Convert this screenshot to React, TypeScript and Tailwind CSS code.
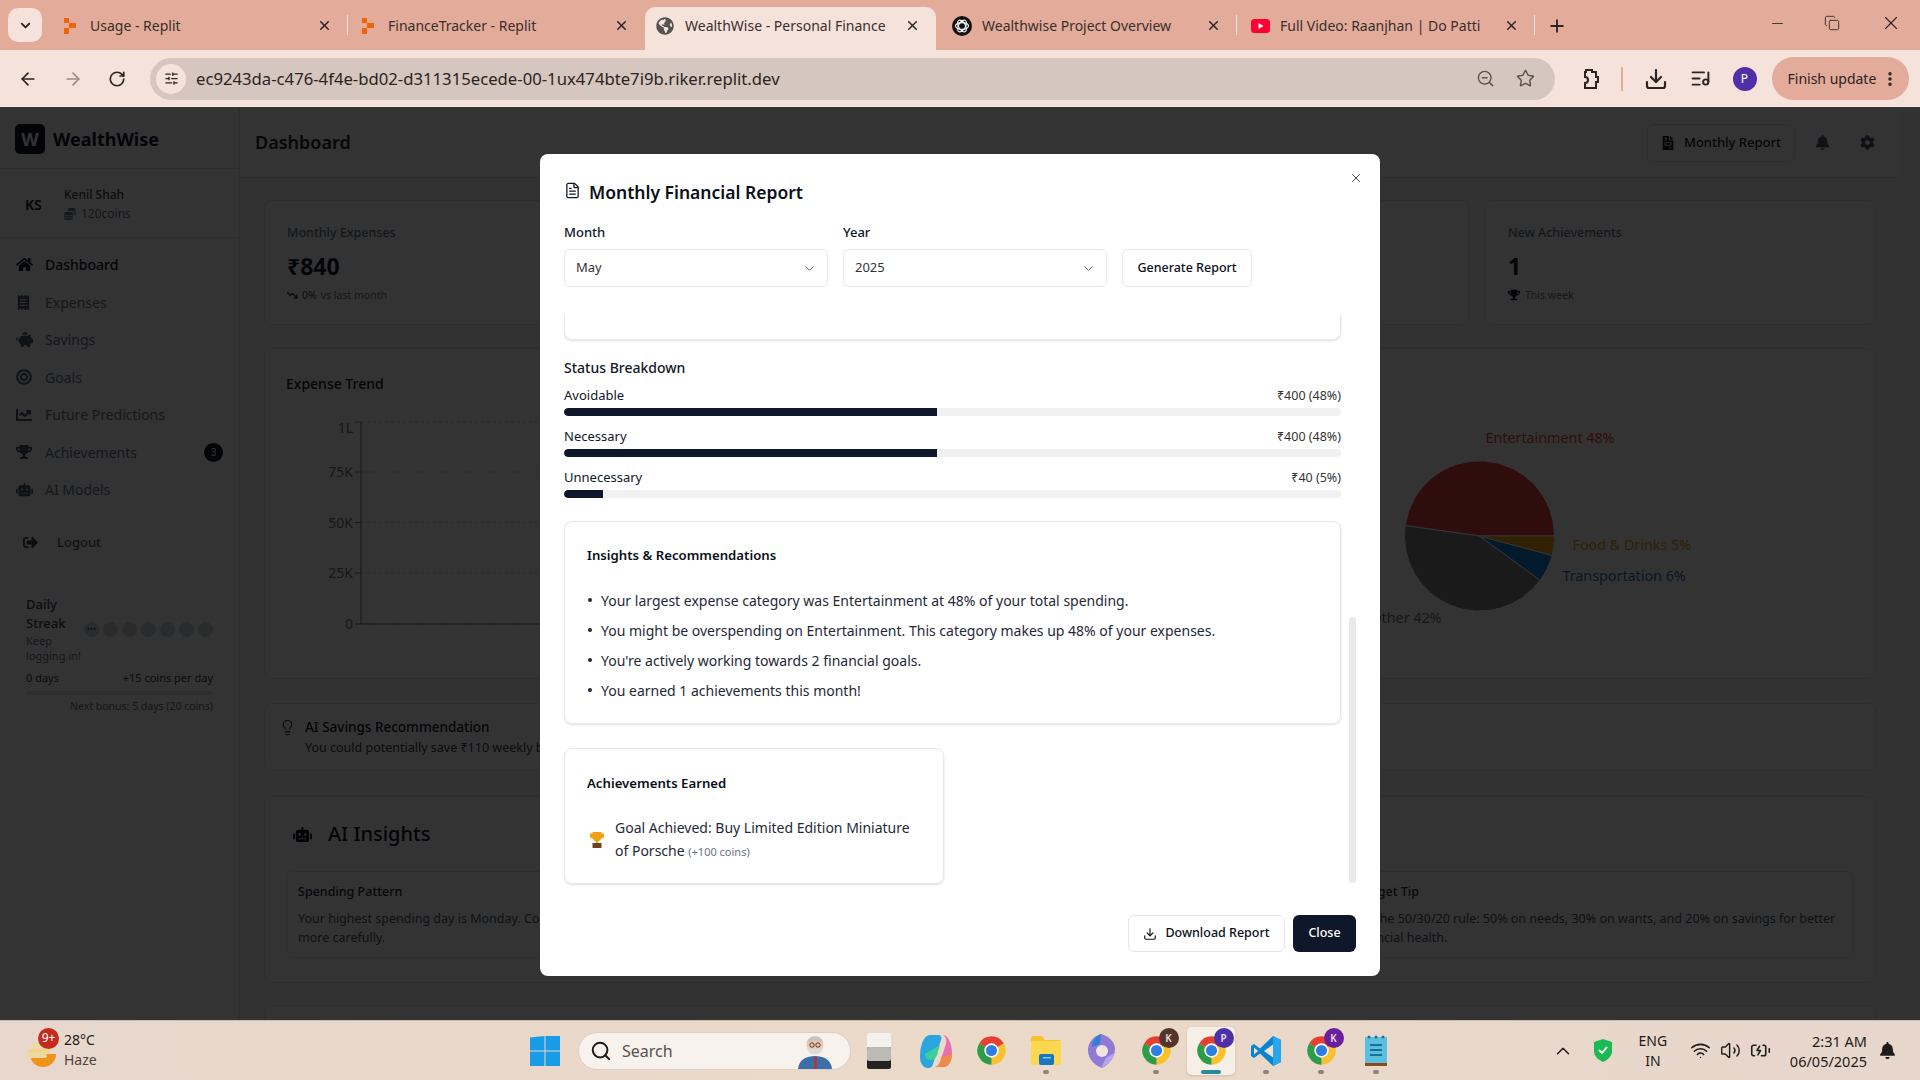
import type { ReactNode } from "react";
import {
  ArrowLeft,
  ArrowRight,
  BatteryCharging,
  ChevronDown,
  ChevronUp,
  Copy,
  Download,
  EllipsisVertical,
  FileText,
  Lightbulb,
  ListMusic,
  Minus,
  Plus,
  RotateCw,
  Search,
  SlidersHorizontal,
  Star,
  Volume2,
  Wifi,
  X,
  ZoomOut,
} from "lucide-react";
import {
  FaBell,
  FaBullseye,
  FaChartLine,
  FaCoins,
  FaCog,
  FaFileInvoice,
  FaGlobeAmericas,
  FaHome,
  FaPiggyBank,
  FaReceipt,
  FaRobot,
  FaSignOutAlt,
  FaTrophy,
} from "react-icons/fa";

function ReplitIcon() {
  return (
    <svg width="14" height="16" viewBox="0 0 14 16" className="shrink-0">
      <path d="M1 0h5v5H1zM6 5h7v5H6zM1 10h5v6H1z" fill="#f26207" />
    </svg>
  );
}

function YoutubeIcon() {
  return (
    <svg width="19" height="14" viewBox="0 0 19 14" className="shrink-0">
      <rect width="19" height="14" rx="3.5" fill="#ff0033" />
      <path d="M7.5 4l5 3-5 3z" fill="#fff" />
    </svg>
  );
}

function ChatGptIcon() {
  return (
    <svg width="20" height="20" viewBox="0 0 20 20" className="shrink-0">
      <circle cx="10" cy="10" r="10" fill="#111" />
      <g fill="none" stroke="#fff" strokeWidth="1.1">
        <ellipse cx="10" cy="10" rx="6.5" ry="3.4" />
        <ellipse cx="10" cy="10" rx="6.5" ry="3.4" transform="rotate(60 10 10)" />
        <ellipse cx="10" cy="10" rx="6.5" ry="3.4" transform="rotate(120 10 10)" />
      </g>
    </svg>
  );
}

function Tab({
  icon,
  title,
  active,
  sep,
  widthClass,
}: {
  icon: ReactNode;
  title: string;
  active?: boolean;
  sep?: boolean;
  widthClass: string;
}) {
  return (
    <div
      className={`relative flex h-[43px] items-center pb-[6px] ${widthClass} ${
        active ? "rounded-t-[10px] bg-[#f5e2db]" : ""
      }`}
    >
      <div className="flex w-[40px] shrink-0 justify-center">{icon}</div>
      <span className="min-w-0 flex-1 overflow-hidden text-[14px] whitespace-nowrap text-[#3b2f2b]">
        {title}
      </span>
      <div className="flex w-[48px] shrink-0 justify-center">
        <X size={15} strokeWidth={2.4} className="text-[#2b2422]" />
      </div>
      {sep && <div className="absolute top-[8px] right-0 h-[20px] w-[1.5px] bg-[#f5e2db]" />}
    </div>
  );
}

function BrowserChrome() {
  return (
    <div className="shrink-0">
      <div className="flex h-[50px] items-end bg-[#e2ab9a] pl-[8px]">
        <div className="mr-[8px] mb-[8px] flex h-[34px] w-[34px] items-center justify-center rounded-[10px] bg-[#f5e2db]">
          <ChevronDown size={15} strokeWidth={3} className="text-[#2b2422]" />
        </div>
        <Tab icon={<ReplitIcon />} title="Usage - Replit" sep widthClass="w-[298px]" />
        <Tab icon={<ReplitIcon />} title="FinanceTracker - Replit" widthClass="w-[297px]" />
        <Tab
          icon={<FaGlobeAmericas size={18} className="text-[#55524f]" />}
          title="WealthWise - Personal Finance"
          active
          widthClass="w-[291px]"
        />
        <Tab icon={<ChatGptIcon />} title="Wealthwise Project Overview" sep widthClass="w-[301px] pl-[6px]" />
        <Tab icon={<YoutubeIcon />} title="Full Video: Raanjhan | Do Patti" sep widthClass="w-[298px] pl-[3px]" />
        <div className="mb-[14px] flex w-[44px] justify-center">
          <Plus size={20} strokeWidth={2.2} className="text-[#2b2422]" />
        </div>
        <div className="mb-[16px] ml-auto flex items-center pr-[18px] text-[#2b2422]">
          <Minus size={17} strokeWidth={1.2} />
          <Copy size={16} strokeWidth={1.3} className="ml-[38px]" />
          <X size={22} strokeWidth={1.2} className="ml-[40px]" />
        </div>
      </div>
      <div className="flex h-[57px] items-center bg-[#f5e2db] pl-[18px]">
        <ArrowLeft size={20} strokeWidth={2} className="text-[#2b2422]" />
        <ArrowRight size={20} strokeWidth={2} className="ml-[25px] text-[#9a8d88]" />
        <RotateCw size={18} strokeWidth={2.2} className="ml-[25px] text-[#2b2422]" />
        <div className="ml-[24px] flex h-[42px] w-[1405px] items-center rounded-full bg-[#d5c6bf] pr-[20px] pl-[6px]">
          <div className="flex h-[30px] w-[30px] items-center justify-center rounded-full bg-[#f5e2db]">
            <SlidersHorizontal size={15} strokeWidth={2} className="text-[#2b2422]" />
          </div>
          <span className="ml-[10px] text-[16.7px] text-[#2b2422]">
            ec9243da-c476-4f4e-bd02-d311315ecede-00-1ux474bte7i9b.riker.replit.dev
          </span>
          <ZoomOut size={19} strokeWidth={1.8} className="ml-auto text-[#5c5452]" />
          <Star size={19} strokeWidth={1.8} className="ml-[21px] text-[#5c5452]" />
        </div>
        <svg width="24" height="24" viewBox="0 0 24 24" className="ml-[23px]" fill="none" stroke="#2b2422" strokeWidth="2">
          <path d="M8 5V3h6v2h4v5h2v5h-2v6H7v-5a3 3 0 0 0 0-6V5z" />
        </svg>
        <div className="ml-[19px] h-[24px] w-[1.5px] bg-[#e2ab9a]" />
        <Download size={24} strokeWidth={2.2} className="ml-[21px] text-[#2b2422]" />
        <ListMusic size={21} strokeWidth={2.2} className="ml-[22px] text-[#2b2422]" />
        <div className="ml-[22px] flex h-[24px] w-[24px] items-center justify-center rounded-full bg-[#4f2fa8] text-[12px] text-white">
          P
        </div>
        <div className="ml-[15px] flex h-[43px] w-[137px] items-center rounded-full bg-[#e2ab9a] pl-[16px] text-[14px] text-[#2b2422]">
          Finish update
          <EllipsisVertical size={18} strokeWidth={2.6} className="ml-[5px]" />
        </div>
      </div>
      <div className="h-px bg-[#3a3a3a]" />
    </div>
  );
}

const navItems = [
  { label: "Dashboard", icon: <FaHome size={17} />, active: true },
  { label: "Expenses", icon: <FaReceipt size={15} /> },
  { label: "Savings", icon: <FaPiggyBank size={17} /> },
  { label: "Goals", icon: <FaBullseye size={16} /> },
  { label: "Future Predictions", icon: <FaChartLine size={16} /> },
  { label: "Achievements", icon: <FaTrophy size={16} />, badge: "3" },
  { label: "AI Models", icon: <FaRobot size={17} /> },
];

function Sidebar() {
  return (
    <aside className="flex h-full w-[240px] shrink-0 flex-col border-r border-[#e5e7eb] bg-white">
      <div className="flex h-[61px] items-center gap-[8px] border-b border-[#e5e7eb] pt-[2px] pl-[15px]">
        <div className="flex h-[30px] w-[30px] items-center justify-center rounded-[5px] bg-[#0f172a] text-[18px] font-bold text-white">
          W
        </div>
        <span className="text-[18px] font-bold text-[#0f172a]">WealthWise</span>
      </div>
      <div className="flex h-[69px] items-center border-b border-[#e5e7eb] pt-[2px] pl-[25px]">
        <span className="w-[39px] text-[14px] font-semibold text-[#0f172a]">KS</span>
        <div>
          <div className="text-[12px] leading-[19px] font-medium text-[#334155]">Kenil Shah</div>
          <div className="flex items-center gap-[5px] text-[12px] leading-[19px] text-[#64748b]">
            <FaCoins size={12} />
            120coins
          </div>
        </div>
      </div>
      <nav className="mt-[8px] flex flex-col">
        {navItems.map((item) => (
          <div
            key={item.label}
            className={`flex h-[37.5px] items-center pr-[16px] pl-[16px] text-[14px] ${
              item.active ? "font-medium text-[#0f172a]" : "text-[#64748b]"
            }`}
          >
            <span className={`flex w-[29px] ${item.active ? "text-[#0f172a]" : "text-[#475569]"}`}>{item.icon}</span>
            {item.label}
            {item.badge && (
              <span className="ml-auto flex h-[19px] w-[19px] items-center justify-center rounded-full bg-[#0f172a] text-[10px] text-white">
                {item.badge}
              </span>
            )}
          </div>
        ))}
      </nav>
      <div className="mt-[24px] flex items-center pl-[23px] text-[13px] font-medium text-[#475569]">
        <FaSignOutAlt size={15} className="mr-[19px] text-[#334155]" />
        Logout
      </div>
      <div className="mt-[43px] px-[26px]">
        <div className="flex items-center justify-between">
          <div className="w-[56px]">
            <div className="text-[13px] leading-[19px] font-medium text-[#334155]">Daily Streak</div>
            <div className="text-[11px] leading-[15px] text-[#64748b]">Keep logging in!</div>
          </div>
          <div className="flex gap-[4px]">
            {[0, 1, 2, 3, 4, 5, 6].map((d) => (
              <div
                key={d}
                className="flex h-[15px] w-[15px] items-center justify-center rounded-full bg-[#d1d5db] text-[8px] leading-none text-[#475569]"
              >
                {d === 0 ? "•••" : ""}
              </div>
            ))}
          </div>
        </div>
        <div className="mt-[7px] flex justify-between text-[11px] text-[#334155]">
          <span>0 days</span>
          <span>+15 coins per day</span>
        </div>
        <div className="mt-[4px] h-[4px] rounded-full bg-[#e5e7eb]" />
        <div className="mt-[4px] text-right text-[10.5px] text-[#64748b]">Next bonus: 5 days (20 coins)</div>
      </div>
    </aside>
  );
}

function StatCard({ title, value, sub }: { title?: string; value?: string; sub?: ReactNode }) {
  return (
    <div className="h-[125px] rounded-lg border border-[#e5e7eb] bg-white px-[22px] pt-[22px]">
      {title && (
        <>
          <div className="text-[12.5px] leading-[20px] font-medium text-[#64748b]">{title}</div>
          <div className="mt-[7px] text-[23px] leading-[32px] font-bold text-[#0f172a]">{value}</div>
          <div className="mt-[5px] flex items-center gap-[4px] text-[10.5px] leading-[16px] text-[#64748b]">{sub}</div>
        </>
      )}
    </div>
  );
}

function TrendChart() {
  const ticks = [
    { y: 10, label: "1L", dy: 11 },
    { y: 60, label: "75K", dy: 5 },
    { y: 110.5, label: "50K", dy: 5 },
    { y: 161, label: "25K", dy: 5 },
    { y: 212, label: "0", dy: 5 },
  ];
  return (
    <svg viewBox="0 0 746 252" className="h-[252px] w-[746px]">
      {ticks.map((t) => (
        <g key={t.label}>
          <line x1="75" x2="746" y1={t.y} y2={t.y} stroke="#d1d5db" strokeDasharray="3 3" />
          <line x1="69" x2="75" y1={t.y} y2={t.y} stroke="#6b7280" />
          <text x="67" y={t.y + t.dy} textAnchor="end" fontSize="14" fill="#6b7280">
            {t.label}
          </text>
        </g>
      ))}
      <line x1="75" x2="75" y1="10" y2="212" stroke="#6b7280" />
      <line x1="75" x2="746" y1="212" y2="212" stroke="#6b7280" />
    </svg>
  );
}

function PieChart() {
  return (
    <svg viewBox="0 0 746 252" className="h-[252px] w-[746px]">
      <g transform="translate(2.5 0)">
        <g stroke="#ffffff" strokeWidth="1">
          <path d="M373 124 L448 124 A75 75 0 0 0 298.7 113.6 Z" fill="#ef4444" />
          <path d="M373 124 L298.7 113.6 A75 75 0 0 0 433.6 168.2 Z" fill="#808080" />
          <path d="M373 124 L433.6 168.2 A75 75 0 0 0 445.7 143.4 Z" fill="#0a84d8" />
          <path d="M373 124 L445.7 143.4 A75 75 0 0 0 448 124 Z" fill="#f59e0b" />
        </g>
        <text x="379" y="31" fontSize="14.3" fill="#ef4444">Entertainment 48%</text>
        <text x="466" y="138" fontSize="14.3" fill="#f59e0b">Food &amp; Drinks 5%</text>
        <text x="456" y="169" fontSize="14.3" fill="#1d74c4">Transportation 6%</text>
        <text x="335" y="211" textAnchor="end" fontSize="14.3" fill="#6b7280">Other 42%</text>
      </g>
    </svg>
  );
}

function Dashboard() {
  const insights = [
    {
      t: "Spending Pattern",
      d: "Your highest spending day is Monday. Consider\nmore carefully.",
    },
    { t: "", d: "" },
    {
      t: "Budget Tip",
      d: "Try the 50/30/20 rule: 50% on needs, 30% on wants, and 20% on savings for better financial health.",
    },
  ];
  return (
    <div className="flex h-full min-w-0 flex-1 flex-col pr-[20px]">
      <header className="flex h-[70px] shrink-0 items-center justify-between border-b border-[#e5e7eb] bg-white pr-[25px] pl-[15px]">
        <h1 className="text-[18px] font-semibold text-[#1e293b]">Dashboard</h1>
        <div className="flex items-center">
          <div className="flex h-[38px] w-[148px] items-center justify-center gap-[9px] rounded-md border border-[#e5e7eb] text-[13px] font-medium text-[#0f172a]">
            <FaFileInvoice size={14} />
            Monthly Report
          </div>
          <FaBell size={15} className="ml-[20px] text-[#475569]" />
          <FaCog size={15} className="ml-[30px] text-[#475569]" />
        </div>
      </header>
      <div className="flex flex-col px-[24px] pt-[22px]">
        <div className="grid grid-cols-4 gap-[16px]">
          <StatCard
            title="Monthly Expenses"
            value="₹840"
            sub={
              <>
                <svg width="11" height="8" viewBox="0 0 11 8" fill="none" stroke="#334155" strokeWidth="1.4">
                  <path d="M0 1l3.5 3.5 2-2L10 7M10 3.5V7H7" />
                </svg>
                <span className="text-[#334155]">0%</span> vs last month
              </>
            }
          />
          <StatCard />
          <StatCard />
          <StatCard
            title="New Achievements"
            value="1"
            sub={
              <>
                <FaTrophy size={12} className="text-[#0f172a]" />
                <span className="ml-[1px]">This week</span>
              </>
            }
          />
        </div>
        <div className="mt-[23px] grid grid-cols-2 gap-[24px]">
          <div className="h-[331px] rounded-lg border border-[#e5e7eb] bg-white px-[21px] pt-[24px]">
            <h3 className="text-[14px] leading-[22px] font-medium text-[#0f172a]">Expense Trend</h3>
            <div className="mt-[17px]">
              <TrendChart />
            </div>
          </div>
          <div className="h-[331px] rounded-lg border border-[#e5e7eb] bg-white px-[21px] pt-[63px]">
            <PieChart />
          </div>
        </div>
        <div className="mt-[24px] flex h-[68px] gap-[9px] rounded-lg border border-[#e5e7eb] bg-white pt-[13px] pl-[14px]">
          <Lightbulb size={17} strokeWidth={1.8} className="mt-[2px] text-[#334155]" />
          <div>
            <div className="text-[13.5px] leading-[21px] font-medium text-[#0f172a]">AI Savings Recommendation</div>
            <div className="text-[12.5px] leading-[19px] text-[#334155]">
              You could potentially save ₹110 weekly by
            </div>
          </div>
        </div>
        <div className="mt-[25px] h-[187px] rounded-lg border border-[#e5e7eb] bg-white px-[21px] pt-[22px]">
          <div className="flex items-center pl-[7px]">
            <FaRobot size={19} className="text-[#0f172a]" />
            <span className="ml-[16px] text-[20px] leading-[30px] font-medium text-[#0f172a]">AI Insights</span>
          </div>
          <div className="mt-[22px] grid grid-cols-3 gap-[16px]">
            {insights.map((c, i) => (
              <div key={i} className="h-[87px] rounded-lg border border-[#e5e7eb] px-[11px] pt-[10px]">
                <div className="text-[12.5px] leading-[20px] font-medium text-[#1e293b]">{c.t}</div>
                <div className="mt-[7px] text-[12.5px] leading-[19px] whitespace-pre-line text-[#475569]">{c.d}</div>
              </div>
            ))}
          </div>
        </div>
        <div className="mt-[22px] h-[100px] rounded-lg border border-[#e5e7eb] bg-white" />
      </div>
    </div>
  );
}

function SelectBox({ value }: { value: string }) {
  return (
    <div className="flex h-[38px] w-[264px] items-center justify-between rounded-md border border-[#e5e7eb] pr-[10px] pl-[11px] text-[13px] text-[#333]">
      {value}
      <ChevronDown size={15} strokeWidth={1.5} className="text-[#555]" />
    </div>
  );
}

function ProgressRow({ label, amount, fillClass }: { label: string; amount: string; fillClass: string }) {
  return (
    <div>
      <div className="flex h-[20px] items-center justify-between text-[13px] text-[#111827]">
        <span>{label}</span>
        <span className="text-[12.5px] text-[#333]">{amount}</span>
      </div>
      <div className="mt-[2px] h-[8px] overflow-hidden rounded-full bg-[#f1f1f1]">
        <div className={`h-full rounded-l-full bg-[#0f172a] ${fillClass}`} />
      </div>
    </div>
  );
}

function ReportModal() {
  const insights = [
    "Your largest expense category was Entertainment at 48% of your total spending.",
    "You might be overspending on Entertainment. This category makes up 48% of your expenses.",
    "You're actively working towards 2 financial goals.",
    "You earned 1 achievements this month!",
  ];
  return (
    <div className="relative mt-[2px] h-[822px] w-[840px] rounded-lg bg-white px-[24px] pt-[24px]">
      <X size={14} strokeWidth={1.5} className="absolute top-[17px] right-[17px] text-[#333]" />
      <div className="flex h-[28px] items-center gap-[8px]">
        <FileText size={17} strokeWidth={1.8} className="mb-[3px] text-[#111827]" />
        <h2 className="text-[17.5px] font-semibold text-[#0b0f19]">Monthly Financial Report</h2>
      </div>
      <div className="mt-[16px] flex items-end gap-[15px]">
        <div>
          <div className="mb-[7px] h-[20px] text-[13px] leading-[20px] font-medium text-[#111827]">Month</div>
          <SelectBox value="May" />
        </div>
        <div>
          <div className="mb-[7px] h-[20px] text-[13px] leading-[20px] font-medium text-[#111827]">Year</div>
          <SelectBox value="2025" />
        </div>
        <div className="flex h-[38px] w-[130px] items-center justify-center rounded-md border border-[#e5e7eb] text-[12.5px] font-medium text-[#0b0f19]">
          Generate Report
        </div>
      </div>
      <div className="relative mt-[28px] h-[571px] overflow-hidden pr-[15px]">
        <div className="h-[25px] rounded-b-lg border-x border-b border-[#e5e7eb] shadow-sm" />
        <h3 className="mt-[16px] h-[24px] text-[14px] leading-[24px] font-medium text-[#111827]">Status Breakdown</h3>
        <div className="mt-[6px] flex flex-col gap-[11px]">
          <ProgressRow label="Avoidable" amount="₹400 (48%)" fillClass="w-[48%]" />
          <ProgressRow label="Necessary" amount="₹400 (48%)" fillClass="w-[48%]" />
          <ProgressRow label="Unnecessary" amount="₹40 (5%)" fillClass="w-[5%]" />
        </div>
        <div className="mt-[23px] h-[203px] rounded-lg border border-[#e5e7eb] p-[22px] shadow-sm">
          <h3 className="h-[22px] text-[13.2px] leading-[22px] font-semibold text-[#0b0f19]">
            Insights &amp; Recommendations
          </h3>
          <ul className="mt-[24px] flex flex-col gap-[10px]">
            {insights.map((line) => (
              <li key={line} className="flex h-[20px] items-center text-[14px] text-[#1f2937]">
                <span className="mr-[9px] ml-[1px] h-[4px] w-[4px] rounded-full bg-[#1f2937]" />
                {line}
              </li>
            ))}
          </ul>
        </div>
        <div className="mt-[24px] h-[136px] w-[380px] rounded-lg border border-[#e5e7eb] p-[22px] shadow-sm">
          <h3 className="h-[24px] text-[13.2px] leading-[24px] font-semibold text-[#0b0f19]">Achievements Earned</h3>
          <div className="mt-[21px] flex items-center gap-[10px] pl-[2px]">
            <svg width="16" height="16" viewBox="0 0 16 16" className="shrink-0">
              <path d="M3.500 0h9v1.500H15V4a3 3 0 0 1-3 2.800A4.500 4.500 0 0 1 9 9.500V11H7V9.500A4.500 4.500 0 0 1 4 6.800 3 3 0 0 1 1 4V1.500h2.500z" fill="#f0a015" />
              <rect x="3.500" y="11" width="9" height="5" fill="#6e4320" />
            </svg>
            <div className="text-[14px] leading-[23px] text-[#1f2937]">
              Goal Achieved: Buy Limited Edition Miniature of Porsche{" "}
              <span className="text-[11px] text-[#6b7280]">(+100 coins)</span>
            </div>
          </div>
        </div>
      </div>
      <div className="absolute top-[463px] right-[24px] h-[266px] w-[7px] rounded-full bg-[#e8e8e8]" />
      <div className="mt-[29px] flex justify-end gap-[8px]">
        <div className="flex h-[37px] w-[157px] items-center justify-center gap-[8px] rounded-md border border-[#e5e7eb] text-[12.5px] font-medium text-[#0b0f19]">
          <Download size={14} strokeWidth={2} />
          Download Report
        </div>
        <div className="flex h-[37px] w-[63px] items-center justify-center rounded-md bg-[#0f172a] text-[12.5px] font-medium text-white">
          Close
        </div>
      </div>
    </div>
  );
}

function ChromeLogo({ badge, badgeClass }: { badge?: string; badgeClass?: string }) {
  return (
    <div className="relative h-[31px] w-[31px]">
      <svg width="31" height="31" viewBox="0 0 24 24">
        <path d="M12 12L2.47 6.500A11 11 0 0 1 21.530 6.500Z" fill="#e5402f" />
        <path d="M12 12L21.530 6.500A11 11 0 0 1 12 23Z" fill="#fbc02d" />
        <path d="M12 12L12 23A11 11 0 0 1 2.470 6.500Z" fill="#2e9b48" />
        <circle cx="12" cy="12" r="5.600" fill="#fff" />
        <circle cx="12" cy="12" r="4.300" fill="#2f7de1" />
      </svg>
      {badge && (
        <div
          className={`absolute -top-[7px] -right-[7px] flex h-[20px] w-[20px] items-center justify-center rounded-full text-[10px] font-semibold text-[#e8dce8] ${badgeClass}`}
        >
          {badge}
        </div>
      )}
    </div>
  );
}

function TaskDot({ children, dot, active }: { children: ReactNode; dot?: boolean; active?: boolean }) {
  return (
    <div
      className={`relative flex h-[48px] w-[48px] items-center justify-center rounded-[5px] ${
        active ? "bg-[#f5efe6] shadow-sm" : ""
      }`}
    >
      {children}
      {dot && <div className="absolute bottom-[1px] left-[21px] h-[4px] w-[6px] rounded-full bg-[#8a8580]" />}
      {active && <div className="absolute bottom-[1px] left-[14px] h-[4px] w-[20px] rounded-full bg-[#2a8a9c]" />}
    </div>
  );
}

function Taskbar() {
  return (
    <div className="relative flex h-[60px] shrink-0 items-center border-t border-[#c9bdb3] bg-gradient-to-r from-[#e7d7cd] via-[#ebdac8] to-[#e6d6cc]">
      <div className="relative ml-[25px] flex w-[39px] shrink-0">
        <svg width="32" height="32" viewBox="0 0 32 32" className="mt-[2px]">
          <path d="M5 18h26a13 13 0 0 1-26 0z" fill="#f0931c" />
          <rect x="3" y="13" width="22" height="4" rx="2" fill="#f4d67d" />
          <rect x="1" y="18" width="21" height="4" rx="2" fill="#ecd9a1" />
          <rect x="7" y="8" width="9" height="3" rx="1.500" fill="#f5dc8d" />
        </svg>
        <div className="absolute -top-[6px] left-[13px] flex h-[21px] w-[21px] items-center justify-center rounded-full bg-[#c42b1c] text-[12px] text-white">
          9+
        </div>
      </div>
      <div className="mb-[2px] w-[60px] shrink-0 text-[14px] leading-[20px] text-[#1f1b18]">
        <div>28°C</div>
        <div className="text-[#4d4640]">Haze</div>
      </div>
      <svg width="30" height="30" viewBox="0 0 30 30" className="ml-[406px] shrink-0">
        <path d="M0 1.500L14.500 0v14.500H0zM15.500 0H30v14.500H15.500zM0 15.500h14.500V30H0zM15.500 15.500H30V30H15.500z" fill="#1a9be6" />
      </svg>
      <div className="ml-[18px] flex h-[38px] w-[273px] shrink-0 items-center rounded-full border border-[#dccfc3] bg-[#f8f2ec] pl-[11px] text-[16px] text-[#57514b]">
        <Search size={22} strokeWidth={2.2} className="text-[#1f1b18]" />
        <span className="ml-[10px]">Search</span>
        <svg width="42" height="36" viewBox="0 0 42 36" className="mr-[14px] ml-auto">
          <path d="M4 36c1-10 9-13 17-13s16 3 17 13z" fill="#3c6ea8" />
          <path d="M20 24h3l-.5 12h-2z" fill="#c03030" />
          <circle cx="21" cy="12" r="8.500" fill="#efc9ae" />
          <path d="M13 14c1 10 15 10 16 0-3 3-13 3-16 0z" fill="#dcdcdc" />
          <path d="M13 10c0-9 16-9 16 0-4-3-12-3-16 0z" fill="#c6c4c0" />
          <circle cx="18" cy="12" r="2.200" fill="none" stroke="#4a3b32" />
          <circle cx="24" cy="12" r="2.200" fill="none" stroke="#4a3b32" />
        </svg>
      </div>
      <div className="relative ml-[16px] h-[36px] w-[24px] shrink-0">
        <div className="absolute top-0 right-0 h-[28px] w-[24px] rounded-[2px] bg-[#f4f2ef]" />
        <div className="absolute top-[14px] left-0 h-[22px] w-[24px] rounded-[2px] bg-[#222]" />
        <div className="absolute top-[14px] left-0 h-[14px] w-[24px] rounded-[2px] bg-[#bdbab6]" />
      </div>
      <svg width="34" height="36" viewBox="0 0 34 36" className="ml-[28px] shrink-0">
        <path d="M11 2h8c3 0 4 2 3 5l-8 24c-1 3-2 4-5 4-5 0-8-5-8-11C1 12 5 2 11 2z" fill="#2aa5e0" />
        <path d="M24 2c5 0 9 9 9 18 0 8-3 14-9 14h-9c3 0 5-2 6-5l6-18c1-4 0-7-3-9z" fill="#e86fb0" />
        <path d="M33 20c0 8-3 14-9 14h-9c3 0 5-2 6-5l2-6c3 1 7 0 10-3z" fill="#f08a4b" />
        <path d="M6 21l15-9-3 10c-1 3-3 5-6 5-4 0-6-3-6-6z" fill="#3ccf9a" />
      </svg>
      <div className="ml-[14px] flex shrink-0 items-center gap-[7px]">
        <TaskDot>
          <ChromeLogo />
        </TaskDot>
        <TaskDot dot>
          <svg width="30" height="29" viewBox="0 0 30 29">
            <path d="M0 2a2 2 0 0 1 2-2h9l3 4h14a2 2 0 0 1 2 2v23H0z" fill="#f2c230" />
            <rect x="0" y="5" width="30" height="24" fill="#fbd84f" />
            <rect x="8" y="18" width="15" height="11" rx="2" fill="#1676c0" />
            <rect x="12" y="21" width="8" height="1.500" fill="#7cc7ef" />
          </svg>
        </TaskDot>
        <TaskDot>
          <svg width="27" height="34" viewBox="0 0 27 34">
            <path d="M13 0c8 2 14 8 14 15 0 9-7 16-13 19-6-2-14-8-14-18C0 8 6 2 13 0z" fill="#8f7ad6" />
            <path d="M13 0c-6 2-9 8-9 13l8-3 1-10z" fill="#2f7fd8" />
            <circle cx="14" cy="17" r="6" fill="#efe5de" />
            <path d="M13 34c6-3 12-8 13-15l-8 5z" fill="#b9a6ea" />
          </svg>
        </TaskDot>
        <TaskDot dot>
          <ChromeLogo badge="K" badgeClass="bg-[#55352a]" />
        </TaskDot>
        <TaskDot active>
          <ChromeLogo badge="P" badgeClass="bg-[#4f2fa8]" />
        </TaskDot>
        <TaskDot dot>
          <svg width="32" height="32" viewBox="0 0 32 32">
            <path d="M23 1l8 4v22l-8 4-13-12.500-6 4.500-3-2V11l3-2 6 4.500z" fill="#0a84d0" />
            <path d="M23 1l8 4v22l-8 4z" fill="#28a8ea" />
            <path d="M23 9.500L14 16l9 6.500z" fill="#f0e0d2" />
            <path d="M4 12.500L8 16l-4 3.500z" fill="#f0e0d2" />
          </svg>
        </TaskDot>
        <TaskDot dot>
          <ChromeLogo badge="K" badgeClass="bg-[#6a1f9c]" />
        </TaskDot>
        <TaskDot dot>
          <svg width="22" height="31" viewBox="0 0 22 31">
            <rect y="2" width="22" height="26" fill="#5bbfe0" />
            <rect y="28" width="22" height="3" fill="#8a4a1c" />
            <rect x="5" y="9" width="12" height="2" fill="#1a6f96" />
            <rect x="5" y="14" width="12" height="2" fill="#1a6f96" />
            <rect x="5" y="19" width="12" height="2" fill="#1a6f96" />
            <circle cx="4" cy="2" r="1.500" fill="#1a6f96" />
            <circle cx="11" cy="2" r="1.500" fill="#1a6f96" />
            <circle cx="18" cy="2" r="1.500" fill="#1a6f96" />
          </svg>
        </TaskDot>
      </div>
      <div className="ml-auto flex items-center pr-[24px] text-[#1f1b18]">
        <ChevronUp size={22} strokeWidth={1.6} />
        <svg width="18" height="23" viewBox="0 0 18 23" className="ml-[20px]">
          <path d="M9 0l9 3v9c0 6-5 9-9 11-4-2-9-5-9-11V3z" fill="#1db954" />
          <path d="M5 11l3 3 5-6" fill="none" stroke="#fff" strokeWidth="1.800" />
        </svg>
        <div className="ml-[21px] w-[40px] text-center text-[14px] leading-[20px]">
          ENG
          <br />
          IN
        </div>
        <Wifi size={21} strokeWidth={1.8} className="ml-[17px]" />
        <Volume2 size={21} strokeWidth={1.6} className="ml-[9px]" />
        <BatteryCharging size={21} strokeWidth={1.8} className="ml-[9px]" />
        <div className="ml-[19px] text-right text-[14.5px] leading-[20px]">
          <div>2:31 AM</div>
          <div>06/05/2025</div>
        </div>
        <FaBell size={17} className="ml-[12px]" />
      </div>
    </div>
  );
}

export default function App() {
  return (
    <div className="flex h-screen w-[1920px] flex-col overflow-hidden font-['Noto_Sans',sans-serif]">
      <BrowserChrome />
      <div className="relative min-h-0 flex-1 overflow-hidden bg-[#f9fafb]">
        <div className="flex h-full">
          <Sidebar />
          <Dashboard />
        </div>
        <div className="absolute inset-0 flex items-center justify-center bg-black/80">
          <ReportModal />
        </div>
      </div>
      <Taskbar />
    </div>
  );
}
